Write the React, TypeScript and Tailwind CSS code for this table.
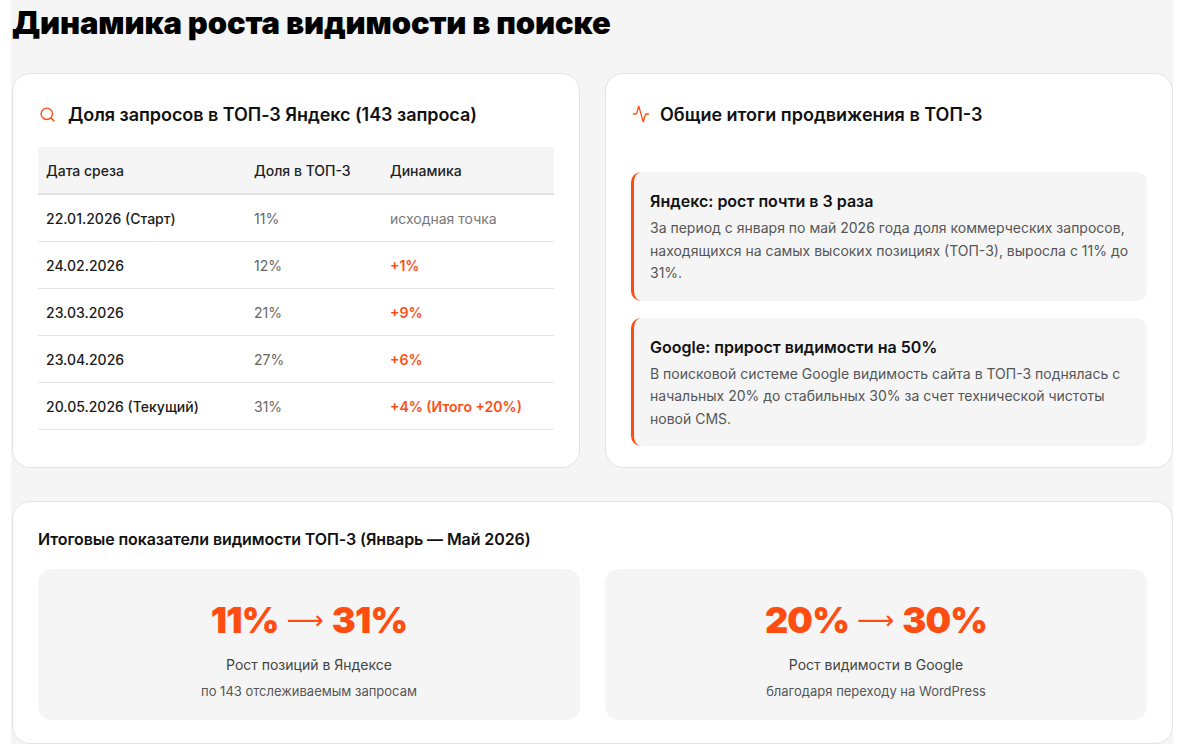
import * as React from "react";
import { Search, Activity } from "lucide-react";

const rows = [
  { date: "22.01.2026 (Старт)", share: "11%", dyn: "исходная точка", up: false },
  { date: "24.02.2026", share: "12%", dyn: "+1%", up: true },
  { date: "23.03.2026", share: "21%", dyn: "+9%", up: true },
  { date: "23.04.2026", share: "27%", dyn: "+6%", up: true },
  { date: "20.05.2026 (Текущий)", share: "31%", dyn: "+4% (Итого +20%)", up: true },
];

export default function App() {
  return (
    <div className="min-h-screen bg-white pl-[11px] font-['Inter','Noto_Sans',sans-serif] text-[#111]">
      <div className="w-[1162px] bg-[#f5f5f5] pl-px pb-4">
        <h1 className="h-[73px] pt-[4px] text-[31px] font-black leading-[38px] tracking-[-0.15px] text-black">
          Динамика роста видимости в поиске
        </h1>

        <div className="grid grid-cols-2 gap-[25px]">
          <div className="h-[395px] rounded-[18px] border border-[#e3e3e3] bg-white px-[25px] pt-[25px]">
            <div className="flex h-[30px] items-center gap-[12px] pl-px">
              <Search size={17} strokeWidth={2} className="text-[#ff4d12]" />
              <span className="text-[18px] font-semibold tracking-[-0.05px]">Доля запросов в ТОП-3 Яндекс (143 запроса)</span>
            </div>
            <div className="mt-[18px] text-[14px]">
              <div className="grid h-[48px] grid-cols-[208px_136px_1fr] items-center border-b-2 border-[#e2e2e2] bg-[#f5f5f5] font-medium text-[#222]">
                <div className="pl-2">Дата среза</div>
                <div className="pl-2">Доля в ТОП-3</div>
                <div className="pl-2">Динамика</div>
              </div>
              {rows.map((r, idx) => (
                <div key={idx} className="grid h-[47px] grid-cols-[208px_136px_1fr] items-center border-b border-[#e5e5e5]">
                  <div className="pl-2 font-medium text-[#1a1a1a]">{r.date}</div>
                  <div className="pl-2 text-[#666]">{r.share}</div>
                  <div className={r.up ? "pl-2 font-semibold text-[#ff4d12]" : "pl-2 text-[#777]"}>{r.dyn}</div>
                </div>
              ))}
            </div>
          </div>

          <div className="h-[395px] rounded-[18px] border border-[#e3e3e3] bg-white px-[25px] pt-[25px]">
            <div className="flex h-[30px] items-center gap-[10px] pl-px">
              <Activity size={18} strokeWidth={1.8} className="text-[#ff4d12]" />
              <span className="text-[18px] font-semibold">Общие итоги продвижения в ТОП-3</span>
            </div>
            <div className="mt-[43px] flex flex-col gap-[17px]">
              <Note title="Яндекс: рост почти в 3 раза">
                За период с января по май 2026 года доля коммерческих запросов, находящихся на самых высоких позициях (ТОП-3), выросла с 11% до 31%.
              </Note>
              <Note title="Google: прирост видимости на 50%">
                В поисковой системе Google видимость сайта в ТОП-3 поднялась с начальных 20% до стабильных 30% за счет технической чистоты новой CMS.
              </Note>
            </div>
          </div>
        </div>

        <div className="mt-[33px] rounded-[18px] border border-[#e3e3e3] bg-white px-[25px] pt-[25px] pb-[23px]">
          <div className="h-[24px] text-[16px] font-semibold leading-[24px] tracking-[-0.1px]">
            Итоговые показатели видимости ТОП-3 (Январь — Май 2026)
          </div>
          <div className="mt-[18px] grid grid-cols-2 gap-[25px]">
            <Stat from="11%" to="31%" label="Рост позиций в Яндексе" sub="по 143 отслеживаемым запросам" />
            <Stat from="20%" to="30%" label="Рост видимости в Google" sub="благодаря переходу на WordPress" />
          </div>
        </div>
      </div>
    </div>
  );
}

function Note({ title, children }: { title: string; children: React.ReactNode }) {
  return (
    <div className="rounded-[10px] border-l-[3px] border-[#ff4d12] bg-[#f5f5f5] pt-[17px] pb-[16px] pl-[16px] pr-[14px]">
      <div className="text-[16px] font-semibold leading-[24px] text-[#111]">{title}</div>
      <div className="mt-[4px] text-[14px] leading-[22.5px] text-[#555]">{children}</div>
    </div>
  );
}

function Stat({ from, to, label, sub }: { from: string; to: string; label: string; sub: string }) {
  return (
    <div className="flex h-[151px] flex-col items-center rounded-[14px] bg-[#f5f5f5] pt-[31px]">
      <div className="flex h-[40px] items-center gap-[8px] text-[36px] leading-[40px] text-[#ff4d12]">
        <span className="font-black tracking-[-0.8px]">{from}</span>
        <span className="font-['DejaVu_Sans',sans-serif] text-[26px] font-normal leading-[40px]">⟶</span>
        <span className="font-black tracking-[-0.8px]">{to}</span>
      </div>
      <div className="mt-[15px] text-[14px] leading-[20px] text-[#444]">{label}</div>
      <div className="mt-[6px] text-[13px] leading-[20px] text-[#555]">{sub}</div>
    </div>
  );
}
